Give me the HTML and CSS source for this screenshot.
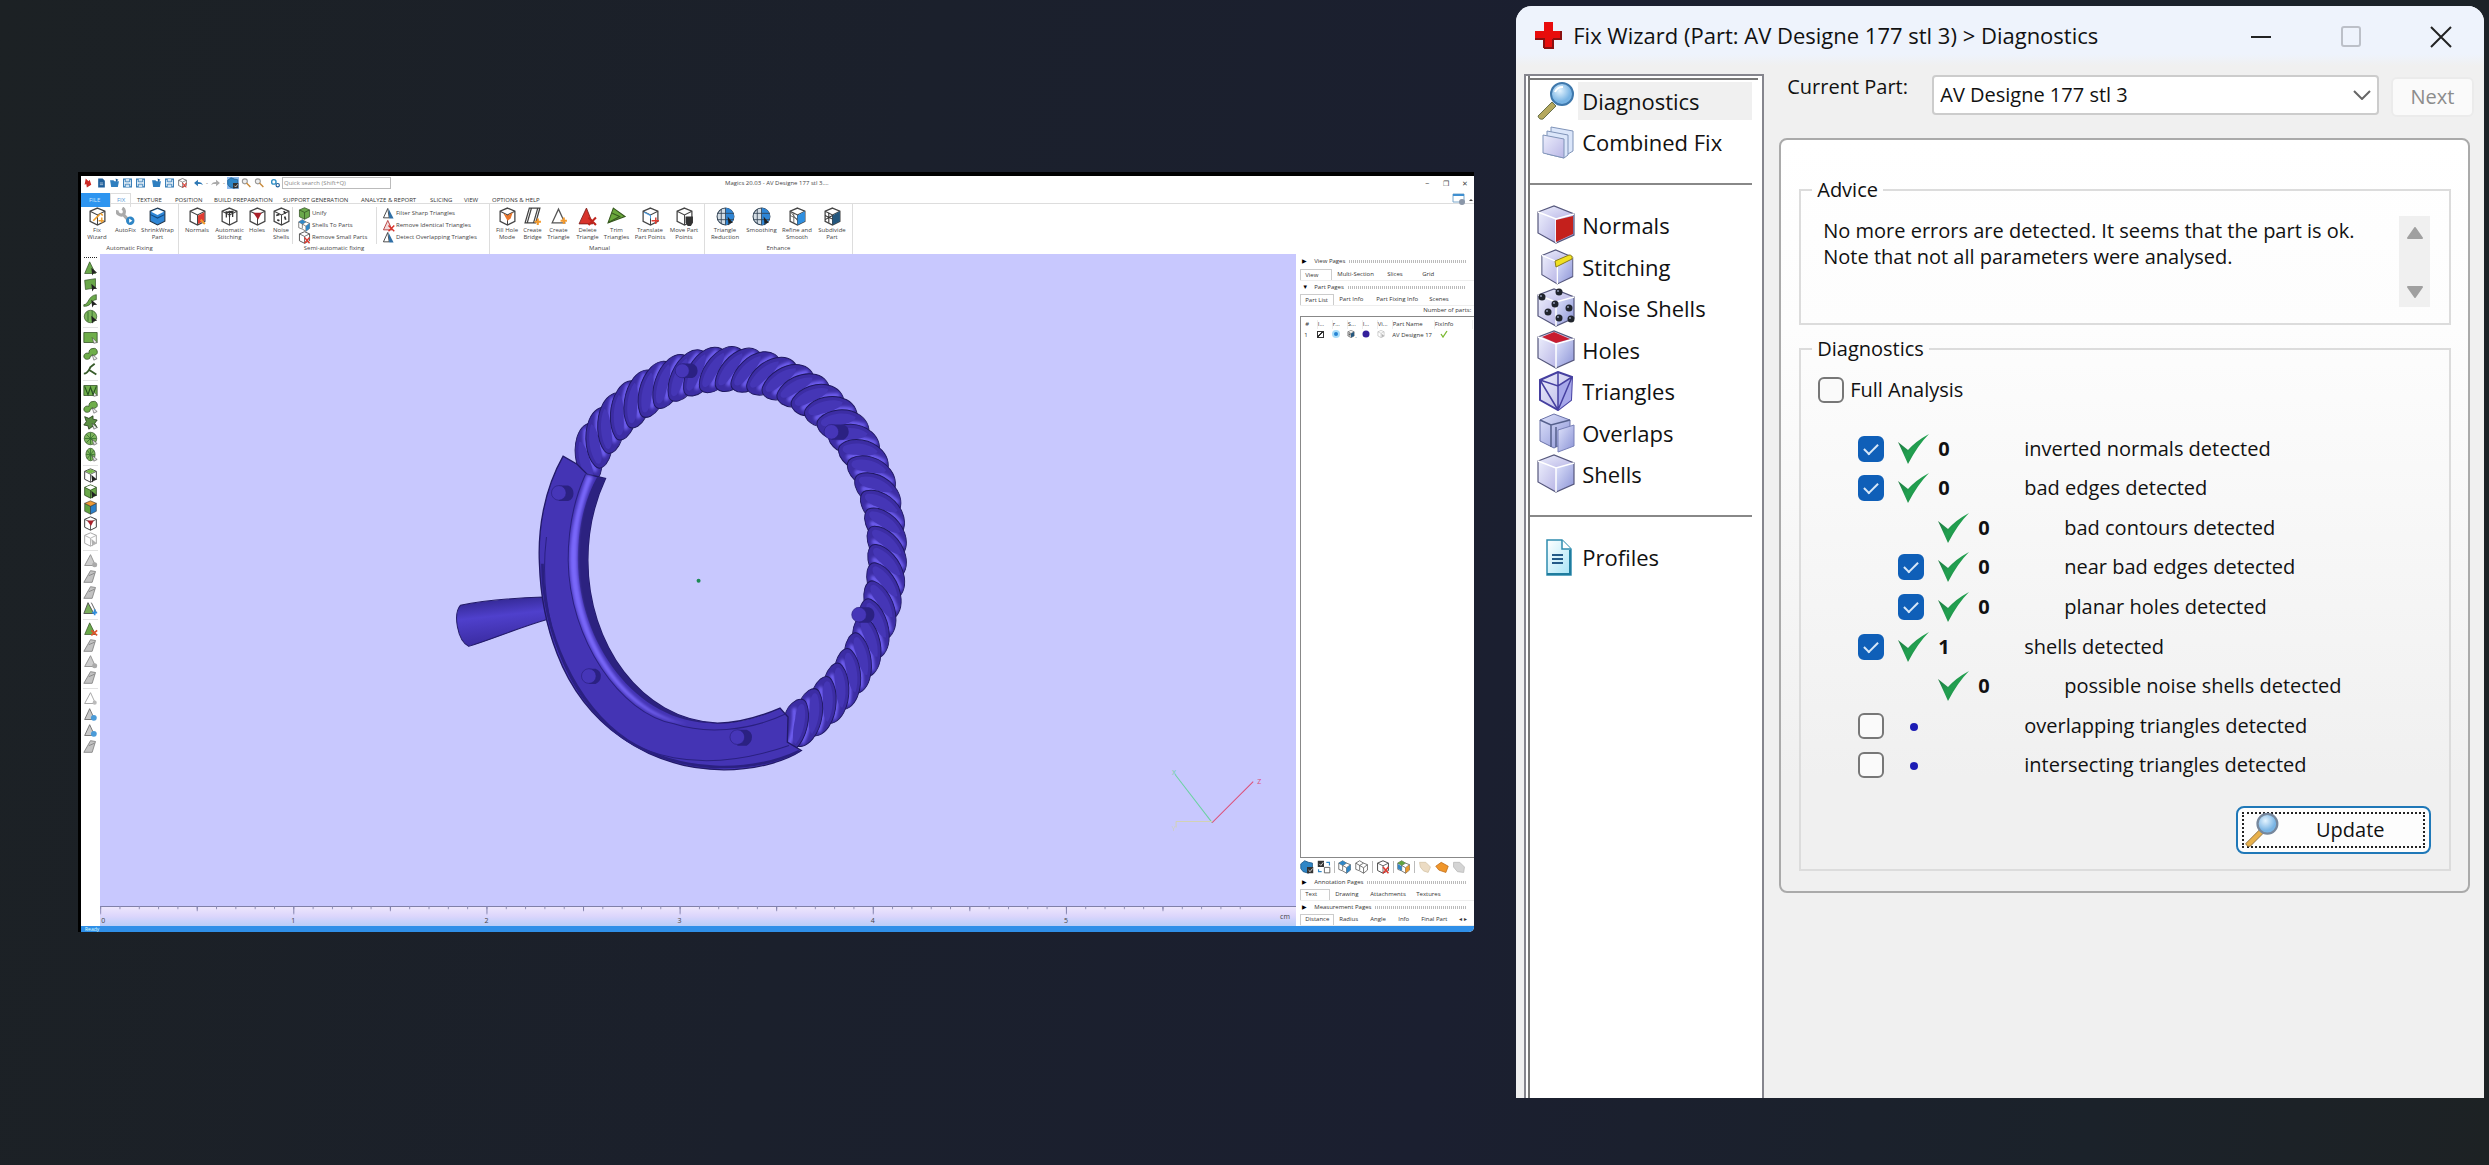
FILE: index.html
```html
<!DOCTYPE html>
<html lang="en">
<head>
<meta charset="utf-8">
<title>Magics - Fix Wizard</title>
<link rel="stylesheet" href="styles.css">
</head>
<body>
<svg class="sprite" aria-hidden="true">
  <defs>
    <linearGradient id="gLilac" x1="0" y1="0" x2="1" y2="1"><stop offset="0" stop-color="#dfe3fb"/><stop offset="1" stop-color="#8b93d6"/></linearGradient>
    <linearGradient id="gTop" x1="0" y1="0" x2="1" y2="1"><stop offset="0" stop-color="#eceefc"/><stop offset="1" stop-color="#b9b6e6"/></linearGradient>
    <radialGradient id="gLens" cx=".4" cy=".35"><stop offset="0" stop-color="#e4f4ff"/><stop offset="1" stop-color="#79b4e4"/></radialGradient>
    <linearGradient id="gTick" x1="0" y1="0" x2="1" y2="1"><stop offset="0" stop-color="#1d6b3c"/><stop offset=".5" stop-color="#22a050"/><stop offset="1" stop-color="#1f7a41"/></linearGradient>
    <linearGradient id="gPage" x1="0" y1="0" x2="1" y2="1"><stop offset="0" stop-color="#fff"/><stop offset="1" stop-color="#a6e4f6"/></linearGradient>
    <linearGradient id="gHandle" x1="0" y1="0" x2=".2" y2="1"><stop offset="0" stop-color="#2b2182"/><stop offset=".45" stop-color="#4f40cc"/><stop offset="1" stop-color="#3a2ba0"/></linearGradient>
    <filter id="soft"><feGaussianBlur stdDeviation="5"/></filter>
  </defs>
  <symbol id="cube" viewBox="0 0 18 18"><path d="M9 1l7 3v9.500l-7 3.500-7-3.500V4z" fill="#fff" stroke="#444" stroke-width="1.200"/><path d="M2 4l7 3.500L16 4M9 7.500V17" fill="none" stroke="#444" stroke-width="1"/></symbol>
  <symbol id="cube-spark" viewBox="0 0 18 18"><use href="#cube"/><path d="M5 13l6-6M12 6l2 2M13 10v5M10 13h5" stroke="#f0a030" stroke-width="1.500"/></symbol>
  <symbol id="cube-blue" viewBox="0 0 18 18"><path d="M9 1l7 3v9.500l-7 3.500-7-3.500V4z" fill="#2f86d6" stroke="#234" stroke-width="1"/><path d="M9 2l6 2.500-6 3-6-3z" fill="#fff"/><path d="M2 7l7 3.500L16 7" fill="none" stroke="#134a80"/></symbol>
  <symbol id="cube-red" viewBox="0 0 18 18"><use href="#cube"/><path d="M9.500 8l6-3v8l-6 3.200z" fill="#e03c32"/><path d="M12 12l4 4" stroke="#f39a2d" stroke-width="2"/></symbol>
  <symbol id="cube-stitch" viewBox="0 0 18 18"><use href="#cube"/><path d="M5 5l8-1M6 4v6M9 3.500v6M12 3.500v6" stroke="#333" stroke-width="1.200"/></symbol>
  <symbol id="cube-hole" viewBox="0 0 18 18"><use href="#cube"/><path d="M5 5.500h8L9.500 12z" fill="#a8202a"/></symbol>
  <symbol id="cube-noise" viewBox="0 0 18 18"><use href="#cube"/><path d="M4 8l3-1M11 4l2 2M5 12l2 1M12 9l1 3" stroke="#333" stroke-width="1.600"/></symbol>
  <symbol id="cube-orange" viewBox="0 0 18 18"><use href="#cube"/><path d="M5 6l4 2 5-3-2 6-3 2z" fill="#e8762c"/></symbol>
  <symbol id="cube-move" viewBox="0 0 18 18"><use href="#cube"/><path d="M10 13h7M14 10v6" stroke="#e03c32" stroke-width="1.400"/><path d="M3 5l6 3v3" fill="none" stroke="#4b9be0"/></symbol>
  <symbol id="cube-hand" viewBox="0 0 18 18"><use href="#cube"/><path d="M10 9h7v6l-2 3h-3l-2-3z" fill="#333"/></symbol>
  <symbol id="cube-fine" viewBox="0 0 18 18"><use href="#cube"/><path d="M9 8l7-4v9.500L9 17z" fill="#2f8fe0"/><path d="M2 8l7 3.500M5.500 5.500V15M2 4l7 9" stroke="#555" stroke-width=".8"/></symbol>
  <symbol id="cube-dark" viewBox="0 0 18 18"><use href="#cube"/><path d="M9 8l7-4v9.500L9 17z" fill="#24577e"/><path d="M2 8l7 3.500M5.500 5.500V15M2 12l7-4" stroke="#333" stroke-width="1"/></symbol>
  <symbol id="cube-green" viewBox="0 0 18 18"><path d="M9 1l7 3v9.500l-7 3.500-7-3.500V4z" fill="#6aa84a" stroke="#2f4d22"/><path d="M2 4l7 3.500L16 4M9 7.500V17" fill="none" stroke="#2f4d22"/></symbol>
  <symbol id="cube-side" viewBox="0 0 18 18"><use href="#cube-green"/><path d="M9 1.500l6 2.500-6 3-6-3z" fill="#fff"/><path d="M10 8l7 6-4 .5-2 3z" fill="#222"/></symbol>
  <symbol id="cube-greentop" viewBox="0 0 18 18"><use href="#cube"/><path d="M9 1.500l6 2.500-6 3-6-3z" fill="#79b84e"/><path d="M10 8l7 6-4 .5-2 3z" fill="#222"/></symbol>
  <symbol id="cube-gray" viewBox="0 0 18 18"><g opacity=".45"><use href="#cube"/><path d="M10 8l7 6-4 .5-2 3z" fill="#555"/></g></symbol>
  <symbol id="cube-mix" viewBox="0 0 18 18"><path d="M2 4l7 3.500V17l-7-3.500z" fill="#5fa23f" stroke="#333" stroke-width=".7"/><path d="M16 4L9 7.500V17l7-3.500z" fill="#2c7fc8" stroke="#333" stroke-width=".7"/><path d="M9 1l7 3-7 3.500L2 4z" fill="#f09a35" stroke="#333" stroke-width=".7"/></symbol>
  <symbol id="cube-x" viewBox="0 0 18 18"><use href="#cube"/><path d="M9 9l7 8M16 9l-7 8" stroke="#e03c32" stroke-width="2"/></symbol>
  <symbol id="wrench" viewBox="0 0 18 18"><path d="M1 3a4 4 0 006 4 4 4 0 00-1-6M6 6l7 8" fill="none" stroke="#aaa" stroke-width="3"/><circle cx="13.500" cy="13" r="4" fill="#2f86c6"/><path d="M12.500 11l3 2-3 2z" fill="#fff"/></symbol>
  <symbol id="globe" viewBox="0 0 18 18"><circle cx="9" cy="9" r="8" fill="#d4dde4" stroke="#345"/><path d="M9 1a8 8 0 010 16z" fill="#2f86d6"/><path d="M5 2v14M1 6h16M1 12h16M9 1v16" stroke="#345" stroke-width=".8"/><path d="M11 9l5 6-3 .5-1 2z" fill="#222"/></symbol>
  <symbol id="tri-outline" viewBox="0 0 18 18"><path d="M9 2L3 15h12z" fill="#fff" stroke="#555" stroke-width="1.200"/><path d="M14 10v6M11 13h6" stroke="#f39a2d" stroke-width="2"/></symbol>
  <symbol id="bridge" viewBox="0 0 18 18"><path d="M6 1h10l-4 14H2zM6 1l2 0-4 14M14 1l-4 14" fill="#fff" stroke="#444" stroke-width="1.200"/><path d="M14 11v6M11 14h6" stroke="#f39a2d" stroke-width="2"/></symbol>
  <symbol id="tri-red" viewBox="0 0 18 18"><path d="M8 1L1 16h13z" fill="#d8342c" stroke="#7c1c18" stroke-width=".8"/><path d="M10 10l7 7M17 10l-7 7" stroke="#c0241c" stroke-width="2"/></symbol>
  <symbol id="tri-trim" viewBox="0 0 18 18"><path d="M6 1l11 8L1 15z" fill="#6aa83c" stroke="#36581f"/><path d="M5 6l7 3-11 6" fill="none" stroke="#36581f"/></symbol>
  <symbol id="tri-blue" viewBox="0 0 18 18"><path d="M8 2L2 15h8z" fill="#fff" stroke="#333" stroke-width="1.200"/><path d="M9 2l7 14h-6z" fill="#2f6fa6"/></symbol>
  <symbol id="tri-x" viewBox="0 0 18 18"><path d="M8 2L2 15h12z" fill="#f2dada" stroke="#b03030" stroke-width="1.200"/><path d="M9 9l8 8M17 9l-8 8" stroke="#d8342c" stroke-width="2"/></symbol>
  <symbol id="tri-green" viewBox="0 0 18 18"><path d="M8 1L2 15h13z" fill="#6aa84a" stroke="#2f4d22" stroke-width=".8"/><path d="M10 8l7 6-4 .5-2 3z" fill="#222"/></symbol>
  <symbol id="quad-green" viewBox="0 0 18 18"><path d="M2 4l13-2v11L3 15z" fill="#6aa84a" stroke="#2f4d22" stroke-width=".8"/><path d="M10 8l7 6-4 .5-2 3z" fill="#222"/></symbol>
  <symbol id="swoosh" viewBox="0 0 18 18"><path d="M1 14c6 0 5-11 15-12v6c-6 0-5 8-15 8z" fill="#6aa84a" stroke="#2f4d22" stroke-width=".8"/><path d="M10 8l7 6-4 .5-2 3z" fill="#222"/></symbol>
  <symbol id="ball" viewBox="0 0 18 18"><circle cx="9" cy="9" r="7.500" fill="#7db45c" stroke="#2f4d22" stroke-width=".8"/><path d="M6 3v12M11 2v14" stroke="#2f6d2a"/><path d="M10 8l7 6-4 .5-2 3z" fill="#222"/></symbol>
  <symbol id="disc" viewBox="0 0 18 18"><circle cx="9" cy="9" r="7.500" fill="#7db45c" stroke="#2f4d22" stroke-width=".8"/><path d="M9 2v14M2 9h14M4 4l10 10M14 4L4 14" stroke="#2f6d2a" stroke-width=".9"/><path d="M11 10l6 5-4 2z" fill="#ddd" stroke="#333" stroke-width=".6"/></symbol>
  <symbol id="oval" viewBox="0 0 18 18"><ellipse cx="9" cy="9" rx="5.500" ry="7.500" fill="#7db45c" stroke="#2f4d22" stroke-width=".8"/><path d="M9 2v14M4 9h10M5 4l8 10M13 4L5 14" stroke="#2f6d2a" stroke-width=".9"/><path d="M11 10l6 5-4 2z" fill="#ddd" stroke="#333" stroke-width=".6"/></symbol>
  <symbol id="rect-green" viewBox="0 0 18 18"><path d="M1 3h16v12H1z" fill="#6fae4a" stroke="#2f4d22" stroke-width=".9"/><path d="M11 9l6 6-4 1z" fill="#eee" stroke="#333" stroke-width=".6"/></symbol>
  <symbol id="rect-mesh" viewBox="0 0 18 18"><use href="#rect-green"/><path d="M2 4l4 10 3-9 3 9 4-10" fill="none" stroke="#24501e" stroke-width="1.300"/></symbol>
  <symbol id="blob" viewBox="0 0 18 18"><path d="M1 12a4 4 0 016-3c0-3 1-6 5-6a4 4 0 012 8l-5 1-1 3c-3 2-7 1-7-3z" fill="#6fae4a" stroke="#2f4d22" stroke-width=".9"/><path d="M11 10l6 5-4 2z" fill="#eee" stroke="#333" stroke-width=".6"/></symbol>
  <symbol id="branch" viewBox="0 0 18 18"><path d="M1 14c5 0 6-4 8-8l5-4M8 10l8 5" fill="none" stroke="#375b29" stroke-width="2.200"/></symbol>
  <symbol id="burst" viewBox="0 0 18 18"><path d="M2 2l5 2 5-3 0 4 5 1-3 4 3 5-6-1-4 3-1-4-5-1 3-4z" fill="#5b8f42" stroke="#263f1c"/><path d="M11 10l6 5-4 2z" fill="#eee" stroke="#333" stroke-width=".6"/></symbol>
  <symbol id="tri-gray" viewBox="0 0 18 18"><path d="M9 2L2 15h13z" fill="#ccc" stroke="#888"/><circle cx="14" cy="14" r="3" fill="#aaa"/></symbol>
  <symbol id="tri-gray2" viewBox="0 0 18 18"><path d="M9 2L1 16h10l4-13zM7 8l7-3" fill="#c2c2c2" stroke="#808080"/></symbol>
  <symbol id="tri-mix" viewBox="0 0 18 18"><path d="M6 2L1 15h12zM10 2l6 12" fill="#79ad5c" stroke="#444"/><path d="M14 10v7M11 14h6" stroke="#2f8fe0" stroke-width="2"/></symbol>
  <symbol id="tri-greenx" viewBox="0 0 18 18"><path d="M8 1L2 15h13z" fill="#6aa84a" stroke="#2f4d22" stroke-width=".8"/><path d="M10 10l7 6M17 10l-7 6" stroke="#e0522a" stroke-width="2"/></symbol>
  <symbol id="tri-white" viewBox="0 0 18 18"><path d="M9 2L2 15h13z" fill="#fff" stroke="#999"/><circle cx="14" cy="14" r="2.500" fill="#bbb"/></symbol>
  <symbol id="tri-bluegray" viewBox="0 0 18 18"><path d="M8 2L2 15h12z" fill="#c8c8c8" stroke="#666"/><circle cx="13" cy="13" r="3.500" fill="#4b9bd8"/></symbol>
  <symbol id="save" viewBox="0 0 18 18"><path d="M2 2h14v14H2z" fill="#fff" stroke="#2f78b4" stroke-width="2"/><path d="M5 2v5h8V2M5 16v-5h8v5" fill="#cfe2f2" stroke="#2f78b4" stroke-width="1.500"/></symbol>
  <symbol id="doc" viewBox="0 0 18 18"><path d="M3 1h8l4 4v12H3z" fill="#1f5f9a"/><path d="M6 9h6M6 12h6" stroke="#fff"/></symbol>
  <symbol id="folder" viewBox="0 0 18 18"><path d="M1 4h6l2 2h8l-2 10H3z" fill="#2f7fc0"/><path d="M11 1l5 2-4 4z" fill="#1f5f9a"/></symbol>
  <symbol id="swirl" viewBox="0 0 18 18"><path d="M4 1l5 5 2-3 3 9-8 5-1-6-3 1z" fill="#cc2a26"/></symbol>
  <symbol id="undo" viewBox="0 0 18 18"><path d="M1 9l7-6v4c5 0 8 2 9 6-2-2-5-3-9-2v4z" fill="#2f78b4"/></symbol>
  <symbol id="redo" viewBox="0 0 18 18"><path d="M17 9l-7-6v4c-5 0-8 2-9 6 2-2 5-3 9-2v4z" fill="#aaa"/></symbol>
  <symbol id="key" viewBox="0 0 18 18"><circle cx="6" cy="6" r="4.500" fill="#eee" stroke="#999" stroke-width="2"/><path d="M9 9l7 7" stroke="#c98a3a" stroke-width="2.500"/></symbol>
  <symbol id="gears" viewBox="0 0 18 18"><circle cx="6" cy="7" r="4" fill="none" stroke="#2f8fc6" stroke-width="2.500"/><circle cx="13" cy="13" r="3" fill="none" stroke="#1f5f9a" stroke-width="2"/></symbol>
  <symbol id="blob-blue" viewBox="0 0 18 18"><path d="M1 5l5-4 5 2 5 1v8l-5 5-7-2-3-4z" fill="#2f86c6" stroke="#1a5484"/><path d="M9 9h8v8H9z" fill="#333"/><path d="M11 13l2 2 3-4" fill="none" stroke="#fff"/></symbol>
  <symbol id="swap" viewBox="0 0 18 18"><path d="M1 1h8v8H1z" fill="#333"/><path d="M3 5l2 2 3-4" fill="none" stroke="#fff"/><path d="M9.500 9.500h7v7h-7z" fill="#fff" stroke="#444"/><path d="M12 3h4v4M2 12v3h4" fill="none" stroke="#2f86c6" stroke-width="1.500"/></symbol>
  <symbol id="cubes" viewBox="0 0 18 18"><path d="M1 4l5-3 5 3 5 2v7l-5 4-5-3-5-2z" fill="#fff" stroke="#555"/><path d="M1 4l5 3 5-3M6 7v6M11 10l5-4M11 10v7M6 7l5 3" fill="none" stroke="#555"/></symbol>
  <symbol id="cubes-blue" viewBox="0 0 18 18"><use href="#cubes"/><path d="M1 4l5-3 5 3-5 3zM11 10l5-4v7l-5 4z" fill="#2f86c6"/></symbol>
  <symbol id="cubes-mix" viewBox="0 0 18 18"><use href="#cubes"/><path d="M1 4l5-3 5 3-5 3z" fill="#5fa23f"/><path d="M11 10l5-4v7l-5 4z" fill="#e8962c"/><path d="M1 5l5 3v6l-5-3z" fill="#2f86c6"/></symbol>
  <symbol id="cloud-tan" viewBox="0 0 18 18"><path d="M2 3h8l6 6-3 7-6-2-4-5z" fill="#ecdcc4" stroke="#d4c4a8"/></symbol>
  <symbol id="cloud-orange" viewBox="0 0 18 18"><path d="M1 8l7-5 9 5-3 8-9-3z" fill="#f0962a" stroke="#c06c18"/></symbol>
  <symbol id="cloud-gray" viewBox="0 0 18 18"><path d="M2 3h8l6 6-1 7-8-1-5-6z" fill="#d4d4d4" stroke="#b8b8b8"/></symbol>

  <symbol id="nav-lens" viewBox="0 0 38 40"><path d="M15 21l4 4L6 38q-4 1-5-3z" fill="#b4a85e" stroke="#68704a"/><circle cx="25" cy="13" r="11" fill="url(#gLens)" stroke="#3f78ac" stroke-width="2"/><path d="M18 11q2-5 8-5" fill="none" stroke="#fff" stroke-width="2"/></symbol>
  <symbol id="btn-lens" viewBox="0 0 38 40"><path d="M16 20l4 4L6 38q-4 1-5-3z" fill="#e8b04a" stroke="#8a6a3a"/><circle cx="25" cy="13" r="11" fill="url(#gLens)" stroke="#76879c" stroke-width="2.500"/></symbol>
  <symbol id="nav-fix" viewBox="0 0 38 40"><path d="M14 5l22 4v20l-5 3-17-4z" fill="#dbe6fa" stroke="#7f93b8"/><path d="M10 9l21 4v20l-4 3-17-4z" fill="#dbe6fa" stroke="#7f93b8"/><path d="M6 13l21 4v19l-21-5z" fill="url(#gTop)" stroke="#7f93b8"/></symbol>
  <symbol id="nav-cube" viewBox="0 0 38 40"><path d="M1 7l18 7v24L1 28z" fill="url(#gTop)"/><path d="M37 9l-18 5v24l18-8z" fill="url(#gLilac)"/><path d="M1 7l16-6 20 8-18 5z" fill="url(#gTop)"/><path d="M1 7l16-6 20 8v21l-18 8L1 28z" fill="none" stroke="#55577c" stroke-width="1.200"/><path d="M1 7l18 7 18-5M19 14v24" fill="none" stroke="#fff" stroke-width="1.500"/></symbol>
  <symbol id="nav-normals" viewBox="0 0 38 40"><use href="#nav-cube"/><path d="M19 15l17-4v18l-17 8z" fill="#c4201c"/></symbol>
  <symbol id="nav-stitch" viewBox="0 0 38 40"><g transform="translate(4 2) scale(.86 .92)"><use href="#nav-cube"/></g><path d="M18 14l14-6q4 0 3 4l-12 6-4 2z" fill="#f0e020" stroke="#8a7c18"/></symbol>
  <symbol id="nav-noise" viewBox="0 0 38 40"><use href="#nav-cube"/><g fill="#20242c"><circle cx="5" cy="9" r="3.500"/><circle cx="22" cy="4" r="3.500"/><circle cx="18" cy="16" r="3.500"/><circle cx="32" cy="20" r="3.500"/><circle cx="11" cy="24" r="3.500"/><circle cx="22" cy="30" r="3.500"/><circle cx="34" cy="31" r="3.500"/></g><g fill="#8e96b0"><circle cx="4" cy="8" r="1"/><circle cx="21" cy="3" r="1"/><circle cx="17" cy="15" r="1"/><circle cx="31" cy="19" r="1"/><circle cx="10" cy="23" r="1"/><circle cx="21" cy="29" r="1"/><circle cx="33" cy="30" r="1"/></g></symbol>
  <symbol id="nav-holes" viewBox="0 0 38 40"><use href="#nav-cube"/><path d="M5 7l12-5 16 7-14 4z" fill="#c81c30"/></symbol>
  <symbol id="nav-tri" viewBox="0 0 38 40"><path d="M3 9l18-8 14 5-1 23-13 10L3 29z" fill="url(#gTop)" stroke="#4640a0" stroke-width="2"/><path d="M21 15l14-9-1 23-13 10z" fill="#a7a8ea"/><path d="M3 9l18 6 14-9M21 15v24M3 9l18 30M35 6L21 39M21 1v14" fill="none" stroke="#4640a0" stroke-width="1.500"/></symbol>
  <symbol id="nav-overlap" viewBox="0 0 38 40"><path d="M3 7l14-6 16 6v20l-16 8L3 28z" fill="url(#gLilac)" stroke="#6a72a8"/><path d="M3 7l11 5 19-5M14 12v22M19 14v20" fill="none" stroke="#55608c" stroke-width="1.500"/><path d="M21 17l16-5v21l-16 6z" fill="url(#gLilac)" stroke="#7880b8"/></symbol>
  <symbol id="nav-doc" viewBox="0 0 38 40"><path d="M10 3h15l9 9v26H10z" fill="url(#gPage)" stroke="#2f8cae" stroke-width="1.500"/><path d="M25 3v9h9" fill="#fff" stroke="#2f8cae" stroke-width="1.500"/><path d="M15 18h11M15 22h11M15 26h11" stroke="#235a88" stroke-width="2"/><path d="M33 13v24H10" fill="none" stroke="#1f7c9e" stroke-width="2"/></symbol>
  <symbol id="tick" viewBox="0 0 32 32"><path d="M0 9l10 8Q18 8 31 1 20 12 10 31 6 22 0 9z" fill="url(#gTick)"/></symbol>
  <symbol id="strand" viewBox="-90 -90 180 180" overflow="visible"><path d="M-72 42C-70 0-30-50 20-64C50-72 80-62 86-38C60-20 40 10 12 40C2 58-20 68-44 68C-62 66-73 58-72 42Z" fill="#3c2da4" stroke="#1f1860" stroke-width="3"/><path d="M58-54C16-34-8 0-28 50" fill="none" stroke="#7262f6" stroke-width="14" filter="url(#soft)"/><path d="M-62 40C-56 4-22-38 14-50C22-36 4-6-18 20C-34 46-58 62-62 40Z" fill="#4536b6"/></symbol>
</svg>

<main class="desktop">
  <section class="magics" aria-label="Magics">
    <header class="mg-title">
      <div class="quick">
        <svg><use href="#swirl"/></svg><svg><use href="#doc"/></svg><svg><use href="#folder"/></svg><svg><use href="#save"/></svg><svg><use href="#save"/></svg>
        <i></i><svg><use href="#folder"/></svg><svg><use href="#save"/></svg><svg><use href="#cube-x"/></svg>
        <i></i><svg><use href="#undo"/></svg><b>-</b><svg><use href="#redo"/></svg><b>-</b>
        <svg class="lit"><use href="#blob-blue"/></svg><svg><use href="#key"/></svg><svg><use href="#key"/></svg><i></i><svg><use href="#gears"/></svg>
      </div>
      <input class="quick-search" type="text" placeholder="Quick search (Shift+Q)" aria-label="Quick search">
      <span class="mg-name">Magics 20.03 - AV Designe 177 stl 3....</span>
      <div class="mg-controls"><button aria-label="Minimize">‒</button><button aria-label="Restore">❐</button><button aria-label="Close">✕</button></div>
    </header>
    <nav class="mg-tabs">
      <button class="file">FILE</button><button class="on">FIX</button><button>TEXTURE</button><button>POSITION</button><button>BUILD PREPARATION</button><button>SUPPORT GENERATION</button><button>ANALYZE &amp; REPORT</button><button>SLICING</button><button>VIEW</button><button>OPTIONS &amp; HELP</button>
      <svg class="panel-ico" viewBox="0 0 22 14"><path d="M1 1h11v8H1z" fill="#fff" stroke="#7aa8cc"/><path d="M1 1h11v2H1z" fill="#3f8fd0"/><circle cx="10" cy="9" r="3" fill="#8a96a8"/><path d="M17 8l2-2 2 2z" fill="#444"/></svg>
    </nav>
    <div class="ribbon">
      <section class="grp g-auto"><div class="items">
        <button><svg><use href="#cube-spark"/></svg>Fix<br>Wizard</button>
        <button><svg><use href="#wrench"/></svg>AutoFix</button>
        <button><svg><use href="#cube-blue"/></svg>ShrinkWrap<br>Part</button>
      </div><h3>Automatic Fixing</h3></section>
      <section class="grp g-semi"><div class="items">
        <button><svg><use href="#cube-red"/></svg>Normals</button>
        <button><svg><use href="#cube-stitch"/></svg>Automatic<br>Stitching</button>
        <button><svg><use href="#cube-hole"/></svg>Holes</button>
        <button><svg><use href="#cube-noise"/></svg>Noise<br>Shells</button>
        <div class="stack">
          <button><svg><use href="#cube-green"/></svg>Unify</button>
          <button><svg><use href="#cubes-blue"/></svg>Shells To Parts</button>
          <button><svg><use href="#cube-x"/></svg>Remove Small Parts</button>
        </div>
        <div class="stack">
          <button><svg><use href="#tri-blue"/></svg>Filter Sharp Triangles</button>
          <button><svg><use href="#tri-x"/></svg>Remove Identical Triangles</button>
          <button><svg><use href="#tri-blue"/></svg>Detect Overlapping Triangles</button>
        </div>
      </div><h3>Semi-automatic fixing</h3></section>
      <section class="grp g-manual"><div class="items">
        <button><svg><use href="#cube-orange"/></svg>Fill Hole<br>Mode</button>
        <button><svg><use href="#bridge"/></svg>Create<br>Bridge</button>
        <button><svg><use href="#tri-outline"/></svg>Create<br>Triangle</button>
        <button><svg><use href="#tri-red"/></svg>Delete<br>Triangle</button>
        <button><svg><use href="#tri-trim"/></svg>Trim<br>Triangles</button>
        <button><svg><use href="#cube-move"/></svg>Translate<br>Part Points</button>
        <button><svg><use href="#cube-hand"/></svg>Move Part<br>Points</button>
      </div><h3>Manual</h3></section>
      <section class="grp g-enhance"><div class="items">
        <button><svg><use href="#globe"/></svg>Triangle<br>Reduction</button>
        <button><svg><use href="#globe"/></svg>Smoothing</button>
        <button><svg><use href="#cube-fine"/></svg>Refine and<br>Smooth</button>
        <button><svg><use href="#cube-dark"/></svg>Subdivide<br>Part</button>
      </div><h3>Enhance</h3></section>
    </div>
    <div class="work">
      <aside class="tools">
        <div><svg><use href="#tri-green"/></svg><svg><use href="#quad-green"/></svg><svg><use href="#swoosh"/></svg><svg><use href="#ball"/></svg></div>
        <div><svg><use href="#rect-green"/></svg><svg><use href="#blob"/></svg><svg><use href="#branch"/></svg></div>
        <div><svg><use href="#rect-mesh"/></svg><svg><use href="#blob"/></svg><svg><use href="#burst"/></svg><svg><use href="#disc"/></svg><svg><use href="#oval"/></svg></div>
        <div><svg><use href="#cube-greentop"/></svg><svg><use href="#cube-side"/></svg><svg><use href="#cube-mix"/></svg><svg><use href="#cube-hole"/></svg><svg><use href="#cube-gray"/></svg></div>
        <div><svg><use href="#tri-gray"/></svg><svg><use href="#tri-gray2"/></svg><svg><use href="#tri-gray2"/></svg><svg><use href="#tri-mix"/></svg></div>
        <div><svg><use href="#tri-greenx"/></svg><svg><use href="#tri-gray2"/></svg><svg><use href="#tri-gray"/></svg><svg><use href="#tri-gray2"/></svg></div>
        <div><svg><use href="#tri-white"/></svg><svg><use href="#tri-bluegray"/></svg><svg><use href="#tri-bluegray"/></svg><svg><use href="#tri-gray2"/></svg></div>
      </aside>
      <div class="view">
        <svg class="scene" viewBox="0 0 1195 651" role="img" aria-label="Ring model">
          <g transform="translate(340 76) scale(.3333)">
            <path d="M60 825C130 810 230 803 310 800L325 866C240 890 160 925 85 948C50 930 38 850 60 825Z" fill="url(#gHandle)" stroke="#221a68" stroke-width="3"/>
            <g transform="translate(848 684) rotate(5) scale(.864 1)">
              <path d="M-464-326A567 567 0 1 1 216 524" fill="none" stroke="#2a2080" stroke-width="96"/>
              <g>
                <g transform="rotate(-61)"><use href="#strand" x="-90" y="-657" width="180" height="180"/></g>
                <g transform="rotate(-55)"><use href="#strand" x="-90" y="-657" width="180" height="180"/></g>
                <g transform="rotate(-49)"><use href="#strand" x="-90" y="-657" width="180" height="180"/></g>
                <g transform="rotate(-43)"><use href="#strand" x="-90" y="-657" width="180" height="180"/></g>
                <g transform="rotate(-37)"><use href="#strand" x="-90" y="-657" width="180" height="180"/></g>
                <g transform="rotate(-31)"><use href="#strand" x="-90" y="-657" width="180" height="180"/></g>
                <g transform="rotate(-25)"><use href="#strand" x="-90" y="-657" width="180" height="180"/></g>
                <g transform="rotate(-19)"><use href="#strand" x="-90" y="-657" width="180" height="180"/></g>
                <g transform="rotate(-13)"><use href="#strand" x="-90" y="-657" width="180" height="180"/></g>
                <g transform="rotate(-7)"><use href="#strand" x="-90" y="-657" width="180" height="180"/></g>
                <g transform="rotate(-1)"><use href="#strand" x="-90" y="-657" width="180" height="180"/></g>
                <g transform="rotate(5)"><use href="#strand" x="-90" y="-657" width="180" height="180"/></g>
                <g transform="rotate(11)"><use href="#strand" x="-90" y="-657" width="180" height="180"/></g>
                <g transform="rotate(17)"><use href="#strand" x="-90" y="-657" width="180" height="180"/></g>
                <g transform="rotate(23)"><use href="#strand" x="-90" y="-657" width="180" height="180"/></g>
                <g transform="rotate(29)"><use href="#strand" x="-90" y="-657" width="180" height="180"/></g>
                <g transform="rotate(35)"><use href="#strand" x="-90" y="-657" width="180" height="180"/></g>
                <g transform="rotate(41)"><use href="#strand" x="-90" y="-657" width="180" height="180"/></g>
                <g transform="rotate(47)"><use href="#strand" x="-90" y="-657" width="180" height="180"/></g>
                <g transform="rotate(53)"><use href="#strand" x="-90" y="-657" width="180" height="180"/></g>
                <g transform="rotate(59)"><use href="#strand" x="-90" y="-657" width="180" height="180"/></g>
                <g transform="rotate(65)"><use href="#strand" x="-90" y="-657" width="180" height="180"/></g>
                <g transform="rotate(71)"><use href="#strand" x="-90" y="-657" width="180" height="180"/></g>
                <g transform="rotate(77)"><use href="#strand" x="-90" y="-657" width="180" height="180"/></g>
                <g transform="rotate(83)"><use href="#strand" x="-90" y="-657" width="180" height="180"/></g>
                <g transform="rotate(89)"><use href="#strand" x="-90" y="-657" width="180" height="180"/></g>
                <g transform="rotate(95)"><use href="#strand" x="-90" y="-657" width="180" height="180"/></g>
                <g transform="rotate(101)"><use href="#strand" x="-90" y="-657" width="180" height="180"/></g>
                <g transform="rotate(107)"><use href="#strand" x="-90" y="-657" width="180" height="180"/></g>
                <g transform="rotate(113)"><use href="#strand" x="-90" y="-657" width="180" height="180"/></g>
                <g transform="rotate(119)"><use href="#strand" x="-90" y="-657" width="180" height="180"/></g>
                <g transform="rotate(125)"><use href="#strand" x="-90" y="-657" width="180" height="180"/></g>
                <g transform="rotate(131)"><use href="#strand" x="-90" y="-657" width="180" height="180"/></g>
                <g transform="rotate(137)"><use href="#strand" x="-90" y="-657" width="180" height="180"/></g>
                <g transform="rotate(143)"><use href="#strand" x="-90" y="-657" width="180" height="180"/></g>
                <g transform="rotate(149)"><use href="#strand" x="-90" y="-657" width="180" height="180"/></g>
              </g>
            </g>
            <path d="M368 378C310 480 292 600 297 700C300 800 315 880 350 970C430 1180 620 1316 850 1318C940 1318 1030 1295 1082 1260L1040 1235L1042 1160L1018 1133C960 1158 900 1178 830 1178C600 1168 442 940 442 690C442 600 460 520 495 445L440 432L410 402Z" fill="#4434b4" stroke="#221a68" stroke-width="4"/>
            <path d="M495 445C460 520 442 600 442 690C442 940 600 1168 830 1178C590 1186 415 940 412 690C412 600 430 510 470 440Z" fill="#2c2280"/>
            <path d="M458 440C420 530 410 600 410 690C410 930 560 1150 740 1180C550 1165 390 930 388 690C388 600 410 520 440 434Z" fill="#7968fa" filter="url(#soft)"/>
            <path d="M435 432C395 520 383 600 383 690C386 930 540 1150 700 1180C790 1210 920 1205 1036 1150M318 620C296 800 340 990 440 1120C570 1300 800 1330 1045 1245" fill="none" stroke="#2a2080" stroke-width="3"/>
            <path d="M306 700C306 900 400 1120 560 1230C720 1330 930 1330 1075 1262" fill="none" stroke="#2a2080" stroke-width="8"/>
            <g fill="#2b2182"><path d="M355 466h28q16 6 16 24t-16 22h-28z"/><path d="M725 100h30q16 6 16 22t-16 22h-30z"/><path d="M1172 283h36q16 6 16 22t-16 24h-36z"/><path d="M1255 831h30q16 6 16 22t-16 24h-30z"/><path d="M445 1015h20q16 6 16 22t-16 24h-20z"/><path d="M890 1198h28q16 6 16 22t-16 26h-28z"/></g>
            <g fill="#4636b8" stroke="#2a2080" stroke-width="2"><circle cx="355" cy="488" r="22"/><circle cx="725" cy="122" r="21"/><circle cx="1172" cy="305" r="22"/><circle cx="1255" cy="853" r="22"/><circle cx="445" cy="1037" r="22"/><circle cx="890" cy="1220" r="22"/></g>
            <circle cx="774" cy="751" r="6" fill="#1d8a54"/>
          </g>
          <path d="M1111 568L1074 520" stroke="#6ad2a0"/><path d="M1111 568L1152 527" stroke="#dc5078"/><path d="M1075 567h36M1075 567v6" stroke="#d2d2b4"/>
          <text x="1071" y="520" fill="#6ad2a0">X</text><text x="1156" y="529" fill="#dc5078">Z</text><text x="1071" y="576" fill="#d2d2b4">Y</text>
        </svg>
        <svg class="ruler" viewBox="0 0 1195 20">
          <defs><pattern id="mm" width="19.300" height="20" patternUnits="userSpaceOnUse"><path d="M.5 0v3" stroke="#8c8cb4"/></pattern><pattern id="cm" width="193" height="20" patternUnits="userSpaceOnUse"><path d="M.5 0v8M97 0v5" stroke="#8080ac"/></pattern></defs>
          <path d="M0 .5h1195" stroke="#8080a8"/><path d="M0 0h1150v20H0z" fill="url(#mm)"/><path d="M0 0h1150v20H0z" fill="url(#cm)"/>
          <text x="1" y="17">0</text><text x="191" y="17">1</text><text x="384" y="17">2</text><text x="577" y="17">3</text><text x="770" y="17">4</text><text x="963" y="17">5</text><text x="1179" y="13">cm</text>
        </svg>
      </div>
      <aside class="pages">
        <h4 class="first"><span>▶</span>View Pages<i></i></h4>
        <div class="ptabs t-view"><button class="on">View</button><button>Multi-Section</button><button>Slices</button><button>Grid</button></div>
        <h4><span>▼</span>Part Pages<i></i></h4>
        <div class="ptabs t-part"><button class="on">Part List</button><button>Part Info</button><button>Part Fixing Info</button><button>Scenes</button></div>
        <p class="count">Number of parts:</p>
        <div class="list">
          <table>
            <thead><tr><th>#</th><th>I...</th><th>r...</th><th>S...</th><th>I...</th><th>Vi...</th><th>Part Name</th><th>FixInfo</th></tr></thead>
            <tbody><tr><td>1</td><td><input type="checkbox" checked aria-label="Select part"></td><td><svg viewBox="0 0 8 8"><circle cx="4" cy="4" r="4" fill="#a8dcf8"/><circle cx="4" cy="4" r="2" fill="#2484d4"/></svg></td><td><svg><use href="#cube-dark"/></svg>.</td><td><svg viewBox="0 0 8 8"><circle cx="4" cy="4" r="3.500" fill="#34209c"/></svg></td><td><svg><use href="#cube-gray"/></svg></td><td>AV Designe 17</td><td><svg viewBox="0 0 8 8"><path d="M1 4l2 3 4-6" fill="none" stroke="#7ab82e" stroke-width="1.300"/></svg></td></tr></tbody>
          </table>
        </div>
        <div class="pbar"><svg><use href="#blob-blue"/></svg><svg><use href="#swap"/></svg><i></i><svg><use href="#cubes-blue"/></svg><svg><use href="#cubes"/></svg><i></i><svg><use href="#cube-x"/></svg><i></i><svg><use href="#cubes-mix"/></svg><i></i><svg><use href="#cloud-tan"/></svg><svg><use href="#cloud-orange"/></svg><svg><use href="#cloud-gray"/></svg></div>
        <h4><span>▶</span>Annotation Pages<i></i></h4>
        <div class="ptabs t-note"><button class="on">Text</button><button>Drawing</button><button>Attachments</button><button>Textures</button></div>
        <h4><span>▶</span>Measurement Pages<i></i></h4>
        <div class="ptabs t-measure"><button class="on">Distance</button><button>Radius</button><button>Angle</button><button>Info</button><button>Final Part</button><button>◂ ▸</button></div>
      </aside>
    </div>
    <footer class="status">Ready</footer>
  </section>

  <section class="wizard" aria-label="Fix Wizard">
    <header class="wz-title">
      <svg class="cross" viewBox="0 0 28 28"><path d="M10 1h9v9h9v8h-9v9h-9v-9H1v-8h9z" fill="#e80c0c"/><path d="M10 27v-9H1M19 18h8v-8M10 27h9v-9" fill="none" stroke="#8a1010" stroke-width="2"/></svg>
      <h1>Fix Wizard (Part: AV Designe 177 stl 3) &gt; Diagnostics</h1>
      <button aria-label="Minimize"><svg viewBox="0 0 22 22"><path d="M1 11h20" stroke="#222" stroke-width="2"/></svg></button>
      <button aria-label="Maximize" disabled><svg viewBox="0 0 22 22"><rect x="2" y="1" width="18" height="19" rx="2" fill="none" stroke="#bcc0c8" stroke-width="2"/></svg></button>
      <button aria-label="Close"><svg viewBox="0 0 22 22"><path d="M1 1l20 20M21 1L1 21" stroke="#222" stroke-width="2"/></svg></button>
    </header>
    <div class="wz-body">
      <nav class="wz-nav"><ul>
        <li class="on"><a href="#diagnostics"><svg><use href="#nav-lens"/></svg><span>Diagnostics</span></a></li>
        <li><a href="#combined"><svg><use href="#nav-fix"/></svg><span>Combined Fix</span></a></li>
        <li class="rule"><hr></li>
        <li><a href="#normals"><svg><use href="#nav-normals"/></svg><span>Normals</span></a></li>
        <li><a href="#stitching"><svg><use href="#nav-stitch"/></svg><span>Stitching</span></a></li>
        <li><a href="#noise"><svg><use href="#nav-noise"/></svg><span>Noise Shells</span></a></li>
        <li><a href="#holes"><svg><use href="#nav-holes"/></svg><span>Holes</span></a></li>
        <li><a href="#triangles"><svg><use href="#nav-tri"/></svg><span>Triangles</span></a></li>
        <li><a href="#overlaps"><svg><use href="#nav-overlap"/></svg><span>Overlaps</span></a></li>
        <li><a href="#shells"><svg><use href="#nav-cube"/></svg><span>Shells</span></a></li>
        <li class="rule"><hr></li>
        <li><a href="#profiles"><svg><use href="#nav-doc"/></svg><span>Profiles</span></a></li>
      </ul></nav>
      <div class="wz-main">
        <div class="part-row">
          <label for="part">Current Part:</label>
          <div class="combo"><select id="part"><option>AV Designe 177 stl 3</option></select><svg viewBox="0 0 18 10"><path d="M1 1l8 8 8-8" fill="none" stroke="#666" stroke-width="2"/></svg></div>
          <button class="next" disabled>Next</button>
        </div>
        <div class="panel">
          <fieldset class="advice"><legend>Advice</legend>
            <div class="advice-in"><p>No more errors are detected. It seems that the part is ok.<br>Note that not all parameters were analysed.</p>
            <div class="scroll"><svg viewBox="0 0 16 12"><path d="M8 1l7 10H1z" fill="#a0a0a0" stroke="#a0a0a0" stroke-linejoin="round" stroke-width="2"/></svg><svg viewBox="0 0 16 12"><path d="M8 11l7-10H1z" fill="#a0a0a0" stroke="#a0a0a0" stroke-linejoin="round" stroke-width="2"/></svg></div></div>
          </fieldset>
          <fieldset class="diag"><legend>Diagnostics</legend>
            <div class="diag-in">
            <label class="full"><input type="checkbox">Full Analysis</label>
            <ul class="checks">
              <li><input id="c1" type="checkbox" checked><svg><use href="#tick"/></svg><b>0</b><label for="c1">inverted normals detected</label></li>
              <li><input id="c2" type="checkbox" checked><svg><use href="#tick"/></svg><b>0</b><label for="c2">bad edges detected</label></li>
              <li class="sub"><i></i><svg><use href="#tick"/></svg><b>0</b><span>bad contours detected</span></li>
              <li class="sub"><input id="c3" type="checkbox" checked><svg><use href="#tick"/></svg><b>0</b><label for="c3">near bad edges detected</label></li>
              <li class="sub"><input id="c4" type="checkbox" checked><svg><use href="#tick"/></svg><b>0</b><label for="c4">planar holes detected</label></li>
              <li><input id="c5" type="checkbox" checked><svg><use href="#tick"/></svg><b>1</b><label for="c5">shells detected</label></li>
              <li class="sub"><i></i><svg><use href="#tick"/></svg><b>0</b><span>possible noise shells detected</span></li>
              <li><input id="c6" type="checkbox"><svg viewBox="0 0 32 32"><circle cx="16" cy="17" r="4" fill="#1c1cb4"/></svg><b></b><label for="c6">overlapping triangles detected</label></li>
              <li><input id="c7" type="checkbox"><svg viewBox="0 0 32 32"><circle cx="16" cy="17" r="4" fill="#1c1cb4"/></svg><b></b><label for="c7">intersecting triangles detected</label></li>
            </ul>
            <button class="update"><span><svg><use href="#btn-lens"/></svg>Update</span></button>
            </div>
          </fieldset>
        </div>
      </div>
    </div>
  </section>
</main>
</body>
</html>
```
FILE: styles.css
```css
* { box-sizing: border-box; margin: 0; padding: 0; }
body { font-family: "Open Sans", "Noto Sans", sans-serif; color: #111; background: linear-gradient(100deg, #1c2124 0%, #1b202c 35%, #1b1f30 60%, #1b222a 85%, #1d2224 100%); }
button, input, select { font: inherit; color: inherit; }
button { border: 0; background: none; }
ul { list-style: none; }
.sprite { display: block; width: 0; height: 0; }
.desktop { display: flex; align-items: flex-start; gap: 42px; min-height: 100vh; padding: 0 5px 0 78px; }

/* Magics window */
.magics { flex: 1395 1 0; min-width: 0; margin-top: 172px; border: solid #000; border-width: 4px 0 0 3px; background: #fff; border-radius: 0 0 5px 0; overflow: hidden; font-size: 6px; line-height: 7px; color: #444; }
.magics button { white-space: nowrap; }
.mg-title { display: flex; align-items: center; height: 17px; padding: 0 4px 3px 2px; }
.quick { display: flex; align-items: center; width: 199px; gap: 2px; }
.quick svg { flex: none; width: 11px; height: 10px; }
.quick i { width: 1px; }
.quick b { font-weight: 400; width: 2px; }
.quick .lit { background: #8fbdf0; width: 12px; height: 12px; }
.quick-search { width: 109px; height: 12px; border: 1px solid #bbb; padding: 0 1px; }
.quick-search::placeholder { color: #888; }
.mg-name { flex: 1; padding-left: 334px; }
.mg-controls { display: flex; gap: 9px; }
.mg-controls button { width: 10px; font-size: 7px; }
.mg-tabs { display: grid; grid-template-columns: 29px 21px 38px 39px 69px 78px 69px 34px 28px 1fr 22px; height: 11px; border-bottom: 1px solid #ddd; }
.mg-tabs button { text-align: left; padding-left: 6px; color: #333; }
.mg-tabs .file { background: #2e95f0; color: #cfe8ff; padding-left: 8px; }
.mg-tabs .on { color: #5a9ad8; border: solid #ddd; border-width: 1px 1px 0; }
.panel-ico { width: 22px; height: 14px; }
.ribbon { display: flex; height: 50px; }
.grp { display: flex; flex-direction: column; border-right: 1px solid #ddd; padding-top: 3px; }
.items { display: grid; height: 37px; }
.items > button { display: flex; flex-direction: column; align-items: center; line-height: 7px; }
.items > button svg { width: 19px; height: 19px; margin-bottom: 1px; flex: none; }
.grp h3 { font: inherit; text-align: center; line-height: 8px; }
.g-auto { width: 98px; } .g-auto .items { grid-template-columns: 32px 25px 39px; }
.g-semi { width: 311px; } .g-semi .items { grid-template-columns: 36px 29px 26px 22px 84px 112px; }
.g-manual { width: 215px; padding-left: 5px; } .g-manual .items { grid-template-columns: 24px 27px 25px 33px 25px 42px 26px; }
.g-enhance { width: 148px; } .g-enhance .items { grid-template-columns: 40px 33px 38px 32px; }
.stack { display: grid; grid-template-rows: repeat(3, 12px); border-left: 1px solid #ddd; padding-left: 5px; }
.stack button { display: flex; align-items: center; gap: 1px; }
.stack svg { width: 13px; height: 13px; flex: none; }
.work { display: grid; grid-template-columns: 19px 1fr 178px; }
.tools { padding: 7px 2px 0; }
.tools::before { content: ""; display: block; height: 0; margin: -4px 1px 3px; border-top: 1px dotted #222; }
.tools div { border-bottom: 1px solid #e2e2e2; padding-bottom: 2px; margin-bottom: 2px; }
.tools div:last-child { border: 0; }
.tools svg { display: block; width: 15px; height: 15px; margin-bottom: 1px; }
.view { background: #c8c8fe; min-width: 0; }
.view svg { display: block; width: 100%; }
.scene text { font-size: 7px; }
.ruler { background: linear-gradient(#efe8fc, #dcd6fc 50%, #b8cdf8); }
.ruler text { font-size: 7px; fill: #444; }
.pages { display: flex; flex-direction: column; padding-left: 4px; background: #fff; color: #333; overflow: hidden; }
.pages h4 { display: flex; align-items: center; gap: 7px; height: 13px; font: inherit; padding-left: 2px; }
.pages h4.first { height: 15px; }
.pages h4 span { width: 5px; color: #000; }
.pages h4 i { flex: 1; height: 3px; margin: 0 8px 0 -3px; background: repeating-linear-gradient(90deg, #bbb 0 1px, #fff 1px 2px); }
.ptabs { display: grid; height: 12px; border-bottom: 1px solid #eee; }
.t-view { grid-template-columns: 32px 50px 35px 1fr; }
.t-part { grid-template-columns: 34px 37px 53px 1fr; }
.t-note { grid-template-columns: 30px 35px 46px 1fr; }
.t-measure { grid-template-columns: 34px 31px 28px 23px 38px 1fr; }
.ptabs button { text-align: left; padding-left: 5px; }
.ptabs .on { border: solid #ccc; border-width: 1px 1px 0; padding-left: 4px; }
.count { text-align: right; padding-right: 3px; height: 10px; line-height: 9px; }
.list { flex: 1; border: solid #888; border-width: 1px 0 1px 1px; }
.list table { table-layout: fixed; width: 172px; border-collapse: collapse; margin-top: 3px; }
.list th { font-weight: 400; text-align: left; height: 9px; border-right: 1px solid #eee; }
.list td { height: 12px; vertical-align: middle; white-space: nowrap; overflow: hidden; }
.list th:nth-child(n+2):nth-child(-n+6) { width: 15px; }
.list th:nth-child(1) { width: 16px; padding-left: 4px; }
.list td:nth-child(1) { padding-left: 3px; }
.list th:nth-child(7) { width: 42px; }
.list td:nth-child(8) { padding-left: 6px; }
.list svg { width: 8px; height: 8px; }
.list input { appearance: none; width: 7px; height: 7px; border: 1px solid #333; background: linear-gradient(135deg, #fff 40%, #333 40% 60%, #fff 60%); }
.pbar { display: flex; align-items: center; gap: 3px; height: 18px; }
.pbar svg { width: 14px; height: 14px; flex: none; }
.pbar i { width: 1px; height: 12px; background: #bbb; }
.status { height: 6px; line-height: 6px; font-size: 5px; padding-left: 4px; background: #2f8fe8; color: #dff; }

/* Fix Wizard dialog */
.wizard { flex: 969 1 0; min-width: 0; align-self: stretch; display: flex; flex-direction: column; margin: 6px 0 67px; border-radius: 16px 16px 0 0; background: #f0f0f0; overflow: hidden; font-size: 20px; line-height: 26px; }
.wz-title { display: flex; align-items: center; height: 60px; padding: 0 0 2px 18px; background: linear-gradient(#eef3fc 80%, #f0f0f0); }
.cross { width: 28px; height: 28px; margin-right: 11px; }
.wz-title h1 { flex: 1; font-size: 22px; font-weight: 400; line-height: 30px; white-space: nowrap; }
.wz-title button { width: 90px; height: 40px; }
.wz-title button:last-child { margin-right: -2px; }
.wz-title button svg { width: 22px; height: 22px; vertical-align: middle; }
.wz-body { flex: 1; display: flex; padding-top: 8px; }
.wz-nav { flex: none; width: 240px; margin-left: 8px; border: solid #85858d; border-width: 2px 2px 0; background: #fff; box-shadow: inset 2px 0 #fff, inset 4px 0 #777; padding-left: 4px; }
.wz-nav ul { display: grid; grid-template-rows: repeat(12, 1fr); height: 500px; margin: 2px 4px 0 -2px; border-top: 2px solid #777; padding: 0 6px 0 2px; }
.wz-nav li { display: grid; align-items: center; }
.wz-nav a { display: flex; align-items: center; color: inherit; text-decoration: none; font-size: 22px; line-height: 38px; padding-left: 7px; }
.wz-nav svg { width: 38px; height: 40px; margin-right: 3px; flex: none; }
.wz-nav span { flex: 1; padding-left: 4px; }
.wz-nav .on span { background: #f0f0f0; }
.wz-nav hr { border: 0; border-top: 2px solid #888; }
.wz-main { flex: 1; min-width: 0; padding: 0 14px 0 15px; }
.part-row { display: flex; align-items: flex-start; margin-right: -4px; padding-left: 8px; height: 64px; }
.part-row > label { width: 145px; }
.combo { flex: 1; display: grid; align-items: center; margin-top: 1px; }
.combo > * { grid-area: 1 / 1; }
.combo select { appearance: none; width: 100%; height: 40px; padding: 0 6px; background: #fff; border: 2px solid #ccc; border-radius: 4px; }
.combo svg { width: 18px; height: 10px; justify-self: end; margin-right: 8px; pointer-events: none; }
.next { width: 83px; height: 40px; margin: 3px 0 0 12px; border: 2px solid #ebebeb; border-radius: 6px; background: #fafafa; color: #8c8c8c; }
.panel { border: 2px solid #aaa; border-radius: 8px; padding: 36px 17px 20px 18px; background: linear-gradient(#fff, #fdfdfd 25%, #f0f0f0 85%); }
fieldset { border: 2px solid #dcdcdc; min-width: 0; }
legend { margin-left: 11px; padding: 0 5px; line-height: 28px; }
.advice-in { display: flex; justify-content: space-between; padding: 12px 19px 16px 22px; }
.advice-in p { padding-top: 2px; }
.scroll { display: flex; flex-direction: column; justify-content: space-between; align-items: center; width: 31px; height: 91px; padding: 11px 0 9px; background: #f0f0f0; flex: none; }
.scroll svg { width: 16px; height: 12px; }
.diag { margin-top: 10px; }
.diag-in { padding: 14px 18px 15px 17px; }
.full { display: flex; align-items: center; gap: 6px; }
.diag input { appearance: none; width: 26px; height: 26px; border: 2px solid #777; border-radius: 6px; background: #fafafa; }
.diag input:checked { border-color: #0f5fb8; background: #0f5fb8; display: grid; place-items: center; }
.diag input:checked::before { content: ""; width: 12px; height: 6px; border: solid #d8e8f8; border-width: 0 0 2px 2px; transform: rotate(-45deg) translate(1px, -1px); }
.checks { display: grid; grid-template-rows: repeat(9, 1fr); height: 356px; margin: 26px 0 21px 40px; }
.checks li { display: grid; grid-template-columns: 40px 40px 86px 1fr; align-items: center; }
.checks .sub { padding-left: 40px; }
.checks svg { width: 32px; height: 32px; }
.update { display: block; width: 195px; height: 48px; margin-left: auto; padding: 4px; border: 2px solid #1f78b8; border-radius: 8px; background: #fdfdfd; }
.update span { display: flex; align-items: center; height: 100%; gap: 36px; border: 2px dotted #222; }
.update svg { width: 36px; height: 36px; }
```
